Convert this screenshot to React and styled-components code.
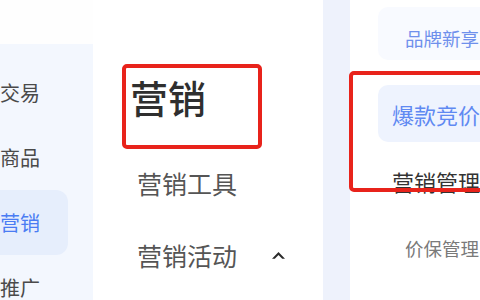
import React from 'react';
import styled, { createGlobalStyle } from 'styled-components';

const GlobalStyle = createGlobalStyle`
  html, body {
    margin: 0;
    padding: 0;
    background: #fefefe;
    font-family: "Noto Sans CJK SC", "Noto Sans", sans-serif;
    overflow: hidden;
  }
`;

const sideItems = [
  { id: 1, label: '交易' },
  { id: 2, label: '商品' },
  { id: 3, label: '营销', active: true },
  { id: 4, label: '推广' },
];

const Caret = () => (
  <svg width="15" height="9" viewBox="0 0 15 9">
    <path d="M7.5 1 L14 7.8 L11.2 7.8 L7.5 4 L3.8 7.8 L1 7.8 Z" fill="#2b2b2b" />
  </svg>
);

const App = () => {
  return (
    <StyledPage>
      <GlobalStyle />
      <StyledSidebar>
        {sideItems.map((item) => (
          <StyledSideItem key={item.id} $active={item.active}>
            {item.label}
          </StyledSideItem>
        ))}
      </StyledSidebar>

      <StyledMiddle>
        <StyledTitle>营销</StyledTitle>
        <StyledMenu>
          <StyledMenuItem>营销工具</StyledMenuItem>
          <StyledMenuItem>
            营销活动
            <StyledCaretWrap>
              <Caret />
            </StyledCaretWrap>
          </StyledMenuItem>
        </StyledMenu>
      </StyledMiddle>

      <StyledStrip />

      <StyledRight>
        <StyledCard>品牌新享</StyledCard>
        <StyledPill>爆款竞价</StyledPill>
        <StyledSubItem>营销管理</StyledSubItem>
        <StyledMinorItem>价保管理</StyledMinorItem>
      </StyledRight>

      {/* 강조 박스 */}
      <StyledMark $left={122} $top={64} $width={140} $height={85} />
      <StyledMark $left={349} $top={71} $width={150} $height={121} />
    </StyledPage>
  );
};

export default App;

const StyledPage = styled.div`
  position: relative;
  display: flex;
  width: 480px;
  height: 300px;
  overflow: hidden;
`;

const StyledSidebar = styled.div`
  width: 93px;
  flex-shrink: 0;
  margin-top: 44px;
  padding-top: 16px;
  background: #f3f7fe;
  display: flex;
  flex-direction: column;
`;

const StyledSideItem = styled.div`
  flex-shrink: 0;
  width: 68px;
  height: 65px;
  display: flex;
  align-items: center;
  font-size: 20px;
  color: ${(p) => (p.$active ? '#4a7cf3' : '#4a4a4a')};
  background: ${(p) => (p.$active ? '#e6eefc' : 'transparent')};
  border-radius: 0 12px 12px 0;
`;

const StyledMiddle = styled.div`
  width: 230px;
  flex-shrink: 0;
  padding-left: 37px;
  box-sizing: border-box;
  background: #ffffff;
  display: flex;
  flex-direction: column;
`;

const StyledTitle = styled.div`
  margin-top: 75px;
  line-height: 44px;
  font-size: 38px;
  font-weight: 500;
  color: #2f2f2f;
`;

const StyledMenu = styled.div`
  margin-top: 28px;
  display: flex;
  flex-direction: column;
`;

const StyledMenuItem = styled.div`
  flex-shrink: 0;
  height: 72px;
  padding-left: 7px;
  display: flex;
  align-items: center;
  font-size: 25px;
  color: #555555;
`;

const StyledCaretWrap = styled.span`
  display: flex;
  margin-left: 34px;
`;

const StyledStrip = styled.div`
  width: 27px;
  flex-shrink: 0;
  background: #eef2fc;
`;

const StyledRight = styled.div`
  flex: 1;
  padding-left: 28px;
  background: #ffffff;
  display: flex;
  flex-direction: column;
`;

const StyledCard = styled.div`
  flex-shrink: 0;
  margin-top: 7px;
  height: 53px;
  padding: 8px 0 0 27px;
  box-sizing: border-box;
  display: flex;
  align-items: center;
  font-size: 18.5px;
  color: #6f90ec;
  background: #f8faff;
  border-radius: 10px 0 0 10px;
`;

const StyledPill = styled.div`
  flex-shrink: 0;
  margin-top: 25px;
  height: 57px;
  padding-left: 14px;
  display: flex;
  align-items: center;
  font-size: 22px;
  color: #5f89f2;
  background: #eef3fe;
  border-radius: 10px 0 0 10px;
`;

const StyledSubItem = styled.div`
  flex-shrink: 0;
  margin-top: 27px;
  line-height: 24px;
  padding-left: 14px;
  font-size: 22px;
  color: #333333;
`;

const StyledMinorItem = styled.div`
  flex-shrink: 0;
  margin-top: 44px;
  line-height: 22px;
  padding-left: 27px;
  font-size: 18.5px;
  color: #7a7a7a;
`;

const StyledMark = styled.div`
  position: absolute;
  left: ${(p) => p.$left}px;
  top: ${(p) => p.$top}px;
  width: ${(p) => p.$width}px;
  height: ${(p) => p.$height}px;
  box-sizing: border-box;
  border: 4px solid #e8231b;
  border-radius: 5px;
`;
